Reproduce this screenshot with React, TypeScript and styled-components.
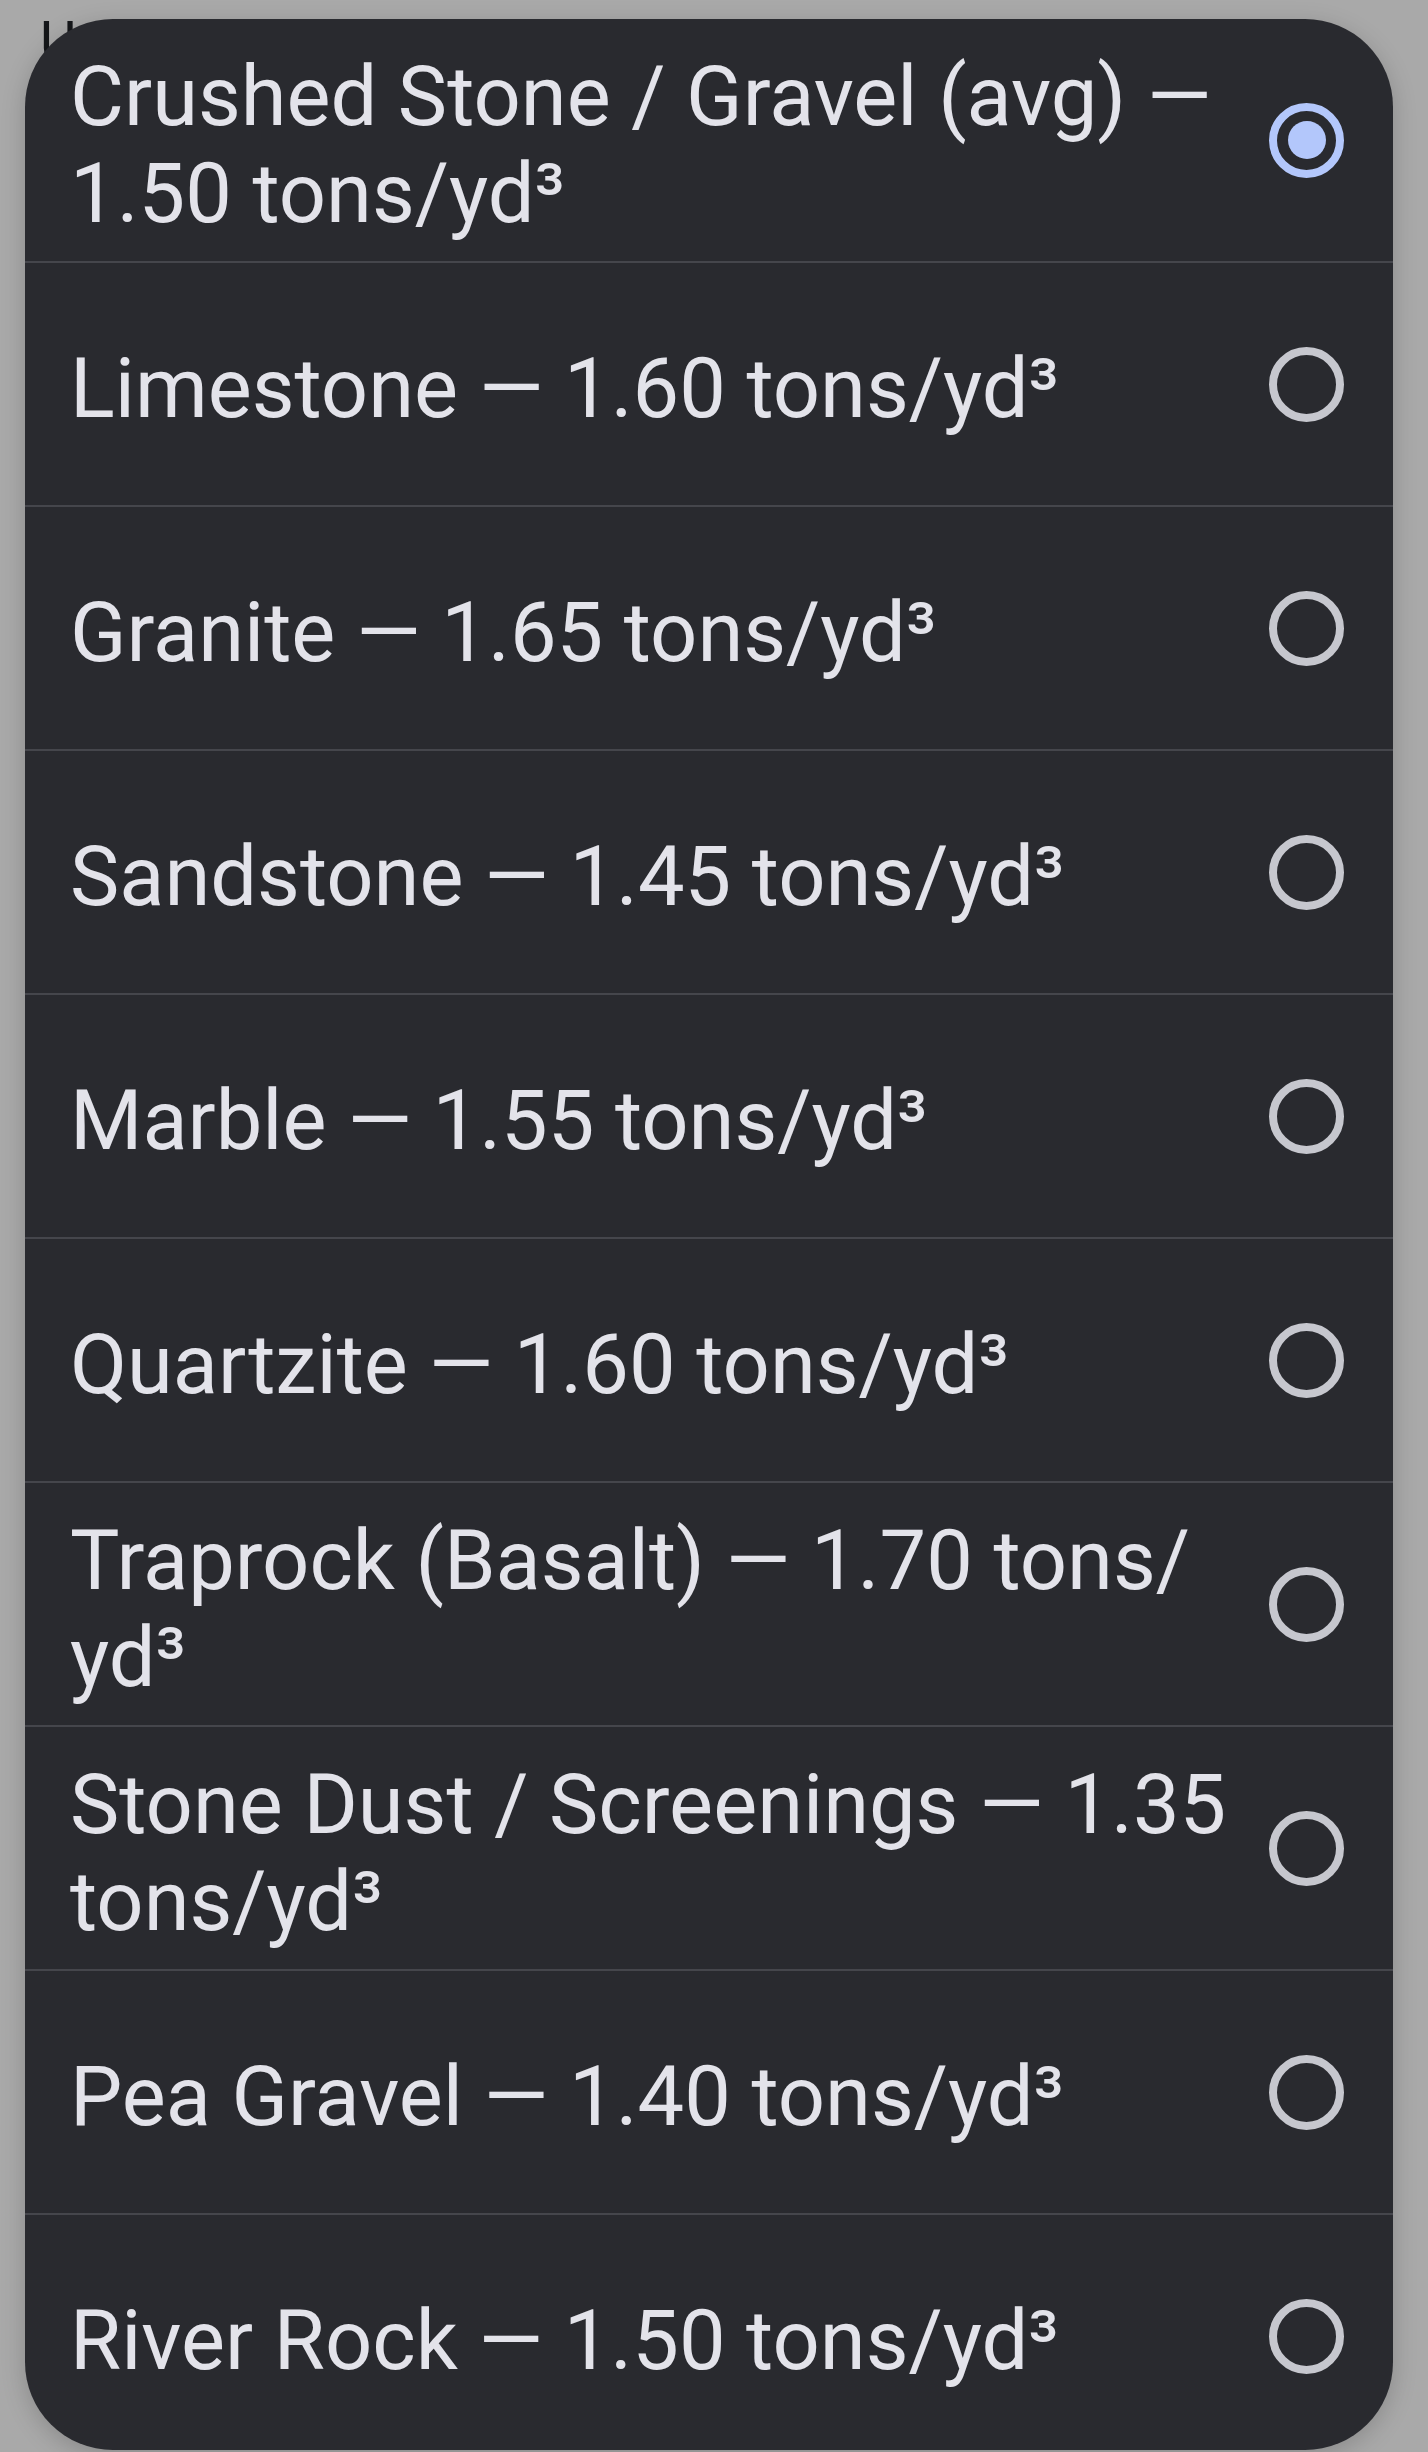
import styled, { createGlobalStyle } from "styled-components";

const GlobalStyle = createGlobalStyle`
  html, body {
    margin: 0;
    padding: 0;
    background: #a9a9a9;
  }
`;

type Material = { name: string; label: React.ReactNode };

const materials: Material[] = [
  { name: "crushed", label: "Crushed Stone / Gravel (avg) — 1.50 tons/yd³" },
  { name: "limestone", label: "Limestone — 1.60 tons/yd³" },
  { name: "granite", label: "Granite — 1.65 tons/yd³" },
  { name: "sandstone", label: "Sandstone — 1.45 tons/yd³" },
  { name: "marble", label: "Marble — 1.55 tons/yd³" },
  { name: "quartzite", label: "Quartzite — 1.60 tons/yd³" },
  {
    name: "traprock",
    label: (
      <>
        Traprock (Basalt) — 1.70 tons/<wbr />yd³
      </>
    ),
  },
  { name: "dust", label: "Stone Dust / Screenings — 1.35 tons/yd³" },
  { name: "pea", label: "Pea Gravel — 1.40 tons/yd³" },
  { name: "river", label: "River Rock — 1.50 tons/yd³" },
];

function Radio({ checked }: { checked: boolean }) {
  return <RadioRing $checked={checked}>{checked && <RadioDot />}</RadioRing>;
}

export default function App() {
  const selected = "crushed";

  return (
    <Screen>
      <GlobalStyle />
      {/* page text peeking out from under the dialog */}
      <BehindText>U</BehindText>
      <Sheet role="radiogroup">
        {materials.map((m) => (
          <Row key={m.name} role="radio" aria-checked={m.name === selected}>
            <Label>{m.label}</Label>
            <Radio checked={m.name === selected} />
          </Row>
        ))}
      </Sheet>
    </Screen>
  );
}

const Screen = styled.div`
  position: relative;
  height: 2452px;
  overflow: hidden;
  padding: 19px 0 0 25px;
  box-sizing: border-box;
  font-family: Roboto, "Noto Sans", sans-serif;
`;

const BehindText = styled.div`
  position: absolute;
  left: 40px;
  top: 14px;
  z-index: 0;
  font-size: 56px;
  line-height: 1;
  color: #15171a;
`;

const Sheet = styled.div`
  position: relative;
  z-index: 1;
  width: 1368px;
  height: 2431px;
  border-radius: 88px;
  background: #292a2f;
  overflow: hidden;
  box-shadow: 0 6px 24px rgba(0, 0, 0, 0.18);
`;

const Row = styled.div`
  display: flex;
  align-items: center;
  height: 242px;
  padding: 0 49px 0 45px;
  border-bottom: 2px solid #45464c;

  &:last-child {
    border-bottom: none;
  }
`;

const Label = styled.div`
  flex: 1;
  padding: 9px 18px 0 0;
  font-size: 83px;
  line-height: 97px;
  color: #e3e3ea;
`;

const RadioRing = styled.div<{ $checked: boolean }>`
  flex: none;
  display: flex;
  align-items: center;
  justify-content: center;
  width: 75px;
  height: 75px;
  box-sizing: border-box;
  border-radius: 50%;
  border: 8px solid ${(p) => (p.$checked ? "#b3c7fb" : "#c6c7ce")};
`;

const RadioDot = styled.div`
  width: 38px;
  height: 38px;
  border-radius: 50%;
  background: #b3c7fb;
`;
